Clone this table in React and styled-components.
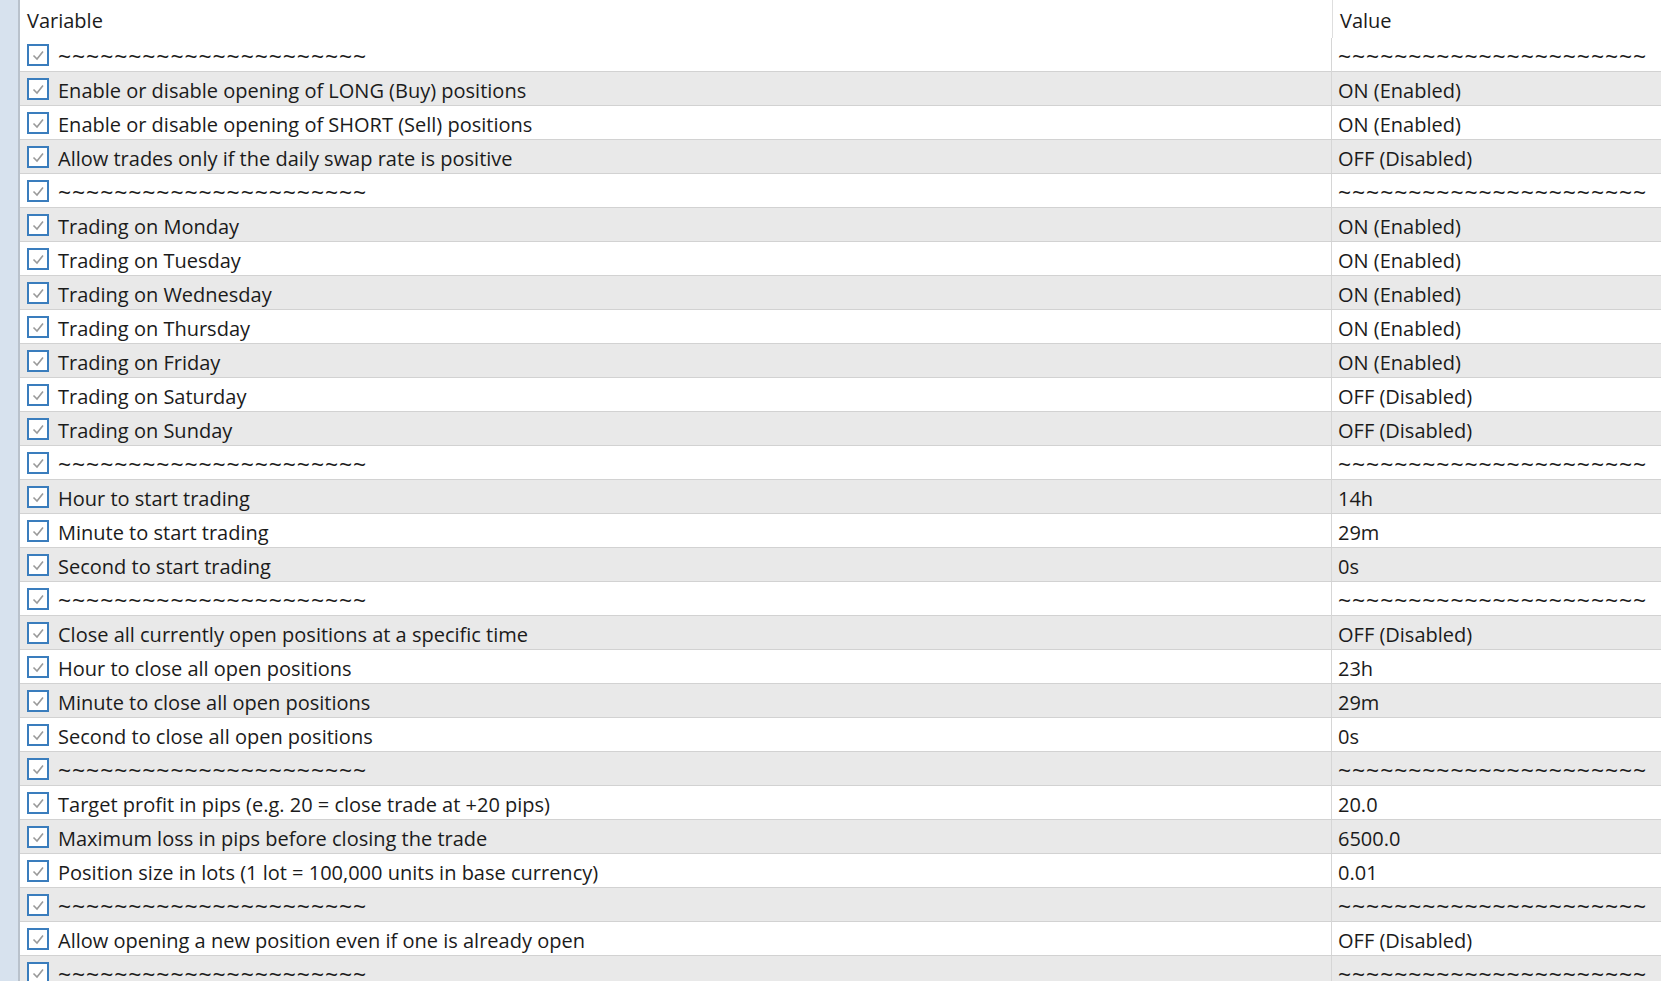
import React from 'react';
import styled, { createGlobalStyle } from 'styled-components';

const TILDES = '~'.repeat(22);

const rows = [
    { name: TILDES, value: TILDES },
    { name: 'Enable or disable opening of LONG (Buy) positions', value: 'ON (Enabled)' },
    { name: 'Enable or disable opening of SHORT (Sell) positions', value: 'ON (Enabled)' },
    { name: 'Allow trades only if the daily swap rate is positive', value: 'OFF (Disabled)' },
    { name: TILDES, value: TILDES },
    { name: 'Trading on Monday', value: 'ON (Enabled)' },
    { name: 'Trading on Tuesday', value: 'ON (Enabled)' },
    { name: 'Trading on Wednesday', value: 'ON (Enabled)' },
    { name: 'Trading on Thursday', value: 'ON (Enabled)' },
    { name: 'Trading on Friday', value: 'ON (Enabled)' },
    { name: 'Trading on Saturday', value: 'OFF (Disabled)' },
    { name: 'Trading on Sunday', value: 'OFF (Disabled)' },
    { name: TILDES, value: TILDES },
    { name: 'Hour to start trading', value: '14h' },
    { name: 'Minute to start trading', value: '29m' },
    { name: 'Second to start trading', value: '0s' },
    { name: TILDES, value: TILDES },
    { name: 'Close all currently open positions at a specific time', value: 'OFF (Disabled)' },
    { name: 'Hour to close all open positions', value: '23h' },
    { name: 'Minute to close all open positions', value: '29m' },
    { name: 'Second to close all open positions', value: '0s' },
    { name: TILDES, value: TILDES },
    { name: 'Target profit in pips (e.g. 20 = close trade at +20 pips)', value: '20.0' },
    { name: 'Maximum loss in pips before closing the trade', value: '6500.0' },
    { name: 'Position size in lots (1 lot = 100,000 units in base currency)', value: '0.01' },
    { name: TILDES, value: TILDES },
    { name: 'Allow opening a new position even if one is already open', value: 'OFF (Disabled)' },
    { name: TILDES, value: TILDES },
];

const GlobalStyle = createGlobalStyle`
    html, body {
        margin: 0;
        padding: 0;
        background: #ffffff;
        overflow: hidden;
    }

    body {
        font-family: "Open Sans", "Noto Sans", sans-serif;
        color: #1b1b1b;
    }
`;

const Check = () => (
    <CheckBox>
        <svg width="18" height="18" viewBox="0 0 18 18">
            <polyline
                points="4.5,9.5 8,13 14,5.5"
                fill="none"
                stroke="#9a9a9a"
                strokeWidth="1.6"
            />
        </svg>
    </CheckBox>
);

const App = () => (
    <>
        <GlobalStyle />
        <Page>
            <Strip />
            <Table>
                <HeaderRow>
                    <HeaderCell>Variable</HeaderCell>
                    <HeaderCell divider>Value</HeaderCell>
                </HeaderRow>
                {rows.map((row, i) => (
                    <Row key={i} shaded={i % 2 === 1}>
                        <NameCell>
                            <Check />
                            <Label tilde={row.name === TILDES}>{row.name}</Label>
                        </NameCell>
                        <ValueCell>
                            <Label tilde={row.value === TILDES}>{row.value}</Label>
                        </ValueCell>
                    </Row>
                ))}
            </Table>
        </Page>
    </>
);

export default App;

const Page = styled.div`
    display: flex;
    width: 1661px;
    height: 981px;
    overflow: hidden;
`;

const Strip = styled.div`
    flex: 0 0 18px;
    background: #d7e2ee;
    border-right: 2px solid #b9c2cc;
`;

const Table = styled.div`
    flex: 1;
    display: flex;
    flex-direction: column;
`;

const HeaderRow = styled.div`
    display: grid;
    grid-template-columns: 1312px 1fr;
    height: 38px;
    flex: 0 0 38px;
`;

const HeaderCell = styled.div`
    display: flex;
    align-items: center;
    padding-left: 7px;
    padding-top: 2px;
    font-size: 20px;
    border-left: ${({ divider }) => (divider ? '1px solid #dedede' : 'none')};
`;

const Row = styled.div`
    display: grid;
    grid-template-columns: 1312px 1fr;
    height: 34px;
    flex: 0 0 34px;
    box-sizing: border-box;
    border-bottom: 1px solid #d2d2d2;
    background: ${({ shaded }) => (shaded ? '#e9e9e9' : '#ffffff')};
`;

const NameCell = styled.div`
    display: flex;
    align-items: center;
    gap: 9px;
    padding-left: 7px;
    border-right: 1px solid #d6d6d6;
`;

const ValueCell = styled.div`
    display: flex;
    align-items: center;
    padding-left: 6px;
`;

const CheckBox = styled.div`
    flex: 0 0 auto;
    width: 22px;
    height: 22px;
    box-sizing: border-box;
    border: 2px solid #3a7dbd;
    background: #ffffff;
    display: flex;
    align-items: center;
    justify-content: center;
`;

const Label = styled.span`
    font-size: ${({ tilde }) => (tilde ? '23px' : '20px')};
    line-height: 1.3;
    white-space: nowrap;
    padding-top: ${({ tilde }) => (tilde ? '4px' : '5px')};
    letter-spacing: ${({ tilde }) => (tilde ? '0.9px' : '0')};
`;
